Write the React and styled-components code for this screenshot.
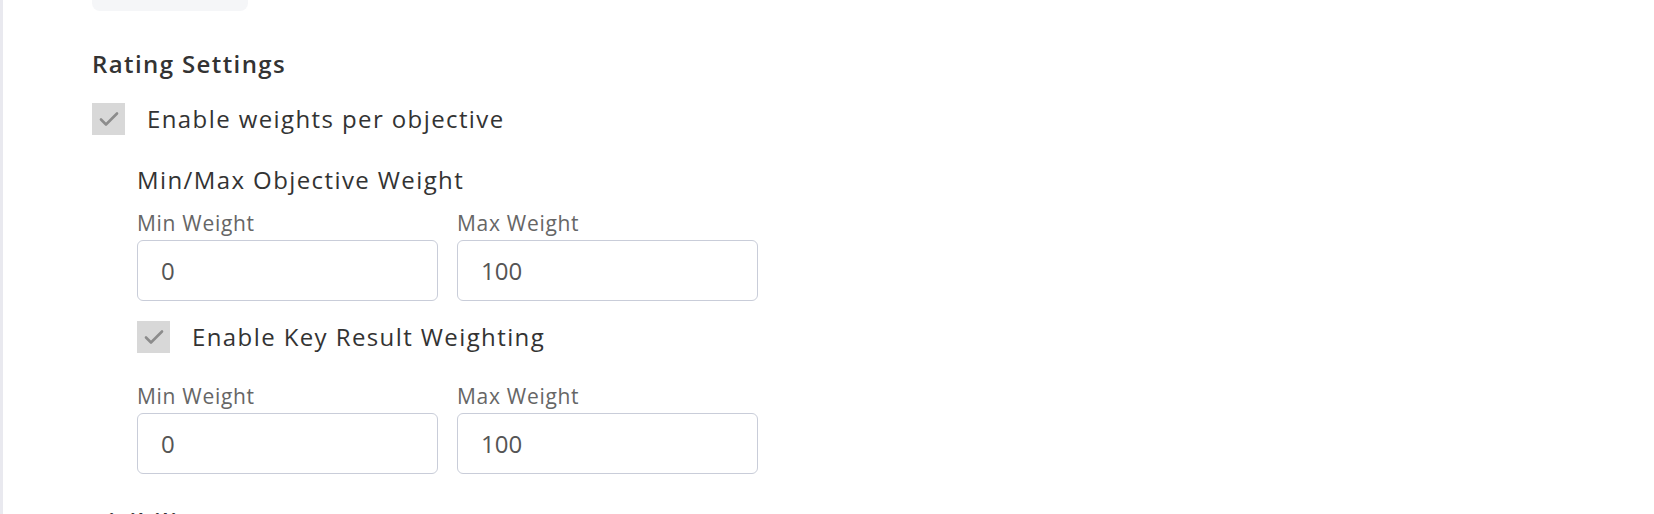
import React from 'react';
import styled, { createGlobalStyle } from 'styled-components';

const GlobalStyle = createGlobalStyle`
  body {
    margin: 0;
    background: #ffffff;
    font-family: 'Open Sans', 'Liberation Sans', sans-serif;
  }
`;

const Page = styled.div`
  min-height: 100vh;
  border-left: 3px solid #e9e9ef;
  padding-left: 89px;
  overflow: hidden;
  box-sizing: border-box;
`;

const TopBox = styled.div`
  width: 156px;
  height: 40px;
  margin-top: -29px;
  background: #f5f6f8;
  border-radius: 8px;
`;

const SectionTitle = styled.h3`
  margin: ${(p) => p.$top}px 0 0;
  font-size: 24px;
  line-height: 32px;
  font-weight: 600;
  letter-spacing: 1.4px;
  color: #333333;
`;

const CheckRow = styled.label`
  display: flex;
  align-items: center;
  gap: 22px;
  margin-top: ${(p) => p.$top}px;
  font-size: 24px;
  line-height: 32px;
  letter-spacing: 1.4px;
  color: #333333;
`;

const Box = styled.span`
  display: flex;
  align-items: center;
  justify-content: center;
  width: 33px;
  height: 32px;
  background: #d8d8d8;
  flex-shrink: 0;
`;

const Indent = styled.div`
  padding-left: 45px;
`;

const GroupTitle = styled.div`
  margin-top: 29px;
  font-size: 24px;
  line-height: 32px;
  letter-spacing: 1.4px;
  color: #333333;
`;

const FieldRow = styled.div`
  display: grid;
  grid-template-columns: 301px 301px;
  column-gap: 19px;
  margin-top: ${(p) => p.$top}px;
`;

const Field = styled.div`
  display: flex;
  flex-direction: column;
`;

const FieldLabel = styled.span`
  font-size: 21px;
  line-height: 28px;
  letter-spacing: 0.7px;
  color: #666666;
`;

const Input = styled.input`
  box-sizing: border-box;
  width: 100%;
  height: 61px;
  margin-top: 3px;
  padding: 0 0 0 23px;
  border: 1px solid #c9cdd9;
  border-radius: 6px;
  font-family: inherit;
  font-size: 24px;
  color: #555555;
  background: #ffffff;
  outline: none;
`;

function Check() {
  return (
    <Box>
      <svg width="20" height="16" viewBox="0 0 20 16">
        <polyline points="2,8.5 7,13.5 18,2.5" fill="none" stroke="#8c8c8c" strokeWidth="2.6" strokeLinecap="round" strokeLinejoin="round" />
      </svg>
    </Box>
  );
}

function WeightFields({ top }) {
  return (
    <FieldRow $top={top}>
      <Field>
        <FieldLabel>Min Weight</FieldLabel>
        <Input defaultValue="0" />
      </Field>
      <Field>
        <FieldLabel>Max Weight</FieldLabel>
        <Input defaultValue="100" />
      </Field>
    </FieldRow>
  );
}

function App() {
  return (
    <>
      <GlobalStyle />
      <Page>
        <TopBox />
        <SectionTitle $top={37}>Rating Settings</SectionTitle>
        <CheckRow $top={23}>
          <Check />
          Enable weights per objective
        </CheckRow>
        <Indent>
          <GroupTitle>Min/Max Objective Weight</GroupTitle>
          <WeightFields top={13} />
          <CheckRow $top={20}>
            <Check />
            Enable Key Result Weighting
          </CheckRow>
          <WeightFields top={29} />
        </Indent>
        <SectionTitle $top={32}>Visibility</SectionTitle>
      </Page>
    </>
  );
}

export default App;
